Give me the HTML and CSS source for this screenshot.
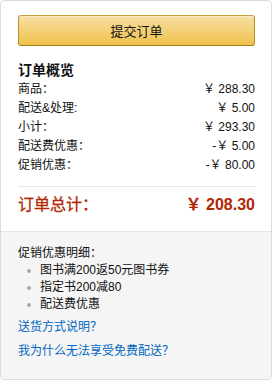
FILE: index.html
```html
<!DOCTYPE html>
<html lang="zh-CN">
<head>
<meta charset="utf-8">
<link rel="stylesheet" href="styles.css">
</head>
<body>
<div class="card">
  <div class="main">
    <button class="submit">提交订单</button>
    <h5 class="title">订单概览</h5>
    <div class="rows">
      <div class="row"><span>商品：</span><span>￥ 288.30</span></div>
      <div class="row"><span>配送&amp;处理:</span><span>￥ 5.00</span></div>
      <div class="row"><span>小计：</span><span>￥ 293.30</span></div>
      <div class="row"><span>配送费优惠：</span><span>-￥ 5.00</span></div>
      <div class="row"><span>促销优惠：</span><span>-￥ 80.00</span></div>
    </div>
    <div class="total"><span class="total-label">订单总计：</span><span class="total-num">￥ 208.30</span></div>
  </div>
  <div class="promo">
    <div class="promo-title">促销优惠明细：</div>
    <ul class="promo-list">
      <li>图书满200返50元图书券</li>
      <li>指定书200减80</li>
      <li>配送费优惠</li>
    </ul>
    <a class="link" href="#">送货方式说明？</a>
    <a class="link" href="#">我为什么无法享受免费配送？</a>
  </div>
</div>
</body>
</html>
```

FILE: styles.css
```css
* { box-sizing: border-box; }
html, body { margin: 0; padding: 0; background: #fff; }
body {
  font-family: "Liberation Sans", Arial, "Noto Sans CJK SC", sans-serif;
  font-size: 12px;
  color: #111;
}
.card {
  width: 272px;
  border: 1px solid #ddd;
  border-radius: 4px;
  overflow: hidden;
}
.main {
  padding: 14px 16px 14px 17px;
}
.submit {
  display: block;
  width: 100%;
  height: 31px;
  margin: 0;
  padding: 0;
  border: 1px solid;
  border-color: #c9a13b #b88f2c #a27c22;
  border-radius: 3px;
  background: linear-gradient(to bottom, #f7dfa5, #f0c14b);
  box-shadow: inset 0 1px 0 rgba(255,255,255,0.4);
  font-family: "Liberation Sans", "Noto Sans CJK SC", sans-serif;
  font-size: 13px;
  color: #111;
}
.title {
  margin: 14px 0 0;
  font-size: 14px;
  line-height: 20px;
  font-weight: bold;
  color: #111;
}
.rows { display: flex; flex-direction: column; }
.row {
  display: flex;
  justify-content: space-between;
  line-height: 19px;
  height: 19px;
}
.total {
  margin-top: 11px;
  border-top: 1px solid #e7e7e7;
  padding-top: 6px;
  display: flex;
  justify-content: space-between;
  align-items: center;
  height: 31px;
  color: #b12704;
  font-size: 16px;
  line-height: 24px;
}
.total-label { font-weight: normal; -webkit-text-stroke: 0.3px #b12704; }
.total-num { font-weight: bold; }
.promo {
  background: #f5f5f5;
  border-top: 1px solid #e7e7e7;
  padding: 13px 16px 18px 17px;
  display: flex;
  flex-direction: column;
  align-items: flex-start;
}
.promo-title { line-height: 17px; }
.promo-list {
  list-style: none;
  margin: 0;
  padding: 0 0 0 22px;
}
.promo-list li {
  position: relative;
  line-height: 17px;
}
.promo-list li::before {
  content: "";
  position: absolute;
  left: -13px;
  top: 7px;
  width: 4px;
  height: 4px;
  border-radius: 50%;
  background: #aaa;
}
.link {
  display: block;
  margin-top: 5px;
  line-height: 19px;
  color: #0066c0;
  text-decoration: none;
  font-size: 12px;
}
```
